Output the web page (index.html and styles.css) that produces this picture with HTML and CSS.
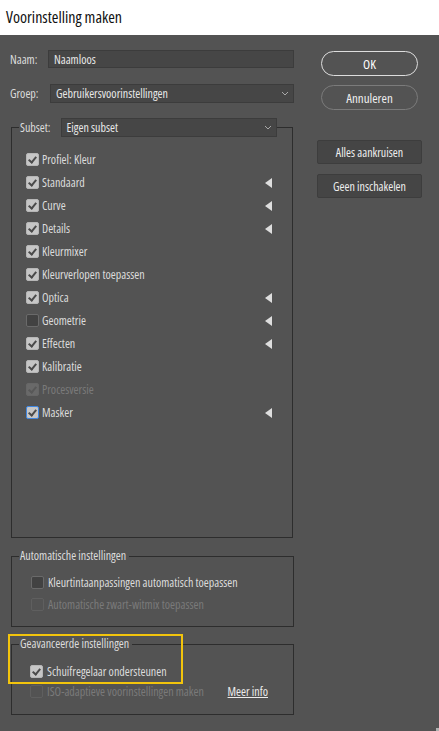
FILE: index.html
```html
<!DOCTYPE html>
<html lang="nl">
<head>
    <meta charset="UTF-8">
    <meta name="viewport" content="width=device-width, initial-scale=1.0">
    <title>Voorinstelling maken</title>
    <link rel="stylesheet" href="styles.css">
</head>
<body>
    <div class="titlebar">Voorinstelling maken</div>

    <div class="dialog">
        <div class="main">
            <div class="field">
                <label class="fieldLabel naamLabel">Naam:</label>
                <div class="textInput">Naamloos</div>
            </div>
            <div class="field groepField">
                <label class="fieldLabel groepLabel">Groep:</label>
                <div class="selectBox">
                    <span>Gebruikersvoorinstellingen</span>
                    <svg class="chevron" width="8" height="5" viewBox="0 0 8 5"><path d="M1 1 L4 4 L7 1" fill="none" stroke="#a8a8a8" stroke-width="1"/></svg>
                </div>
            </div>

            <fieldset class="group subset">
                <legend class="subsetLegend">
                    <span>Subset:</span>
                    <div class="selectBox subsetSelect">
                        <span>Eigen subset</span>
                        <svg class="chevron" width="8" height="5" viewBox="0 0 8 5"><path d="M1 1 L4 4 L7 1" fill="none" stroke="#a8a8a8" stroke-width="1"/></svg>
                    </div>
                </legend>
                <ul class="checkList">
                    <li class="checkRow"><span class="cb on"></span><span class="checkText">Profiel: Kleur</span></li>
                    <li class="checkRow"><span class="cb on"></span><span class="checkText">Standaard</span><span class="arrow"></span></li>
                    <li class="checkRow"><span class="cb on"></span><span class="checkText">Curve</span><span class="arrow"></span></li>
                    <li class="checkRow"><span class="cb on"></span><span class="checkText">Details</span><span class="arrow"></span></li>
                    <li class="checkRow"><span class="cb on"></span><span class="checkText">Kleurmixer</span></li>
                    <li class="checkRow"><span class="cb on"></span><span class="checkText">Kleurverlopen toepassen</span></li>
                    <li class="checkRow"><span class="cb on"></span><span class="checkText">Optica</span><span class="arrow"></span></li>
                    <li class="checkRow"><span class="cb"></span><span class="checkText">Geometrie</span><span class="arrow"></span></li>
                    <li class="checkRow"><span class="cb on"></span><span class="checkText">Effecten</span><span class="arrow"></span></li>
                    <li class="checkRow"><span class="cb on"></span><span class="checkText">Kalibratie</span></li>
                    <li class="checkRow disabled"><span class="cb on"></span><span class="checkText">Procesversie</span></li>
                    <li class="checkRow"><span class="cb on focus"></span><span class="checkText">Masker</span><span class="arrow"></span></li>
                </ul>
            </fieldset>

            <fieldset class="group auto">
                <legend class="textLegend">Automatische instellingen</legend>
                <ul class="checkList small">
                    <li class="checkRow"><span class="cb"></span><span class="checkText">Kleurtintaanpassingen automatisch toepassen</span></li>
                    <li class="checkRow disabled"><span class="cb"></span><span class="checkText">Automatische zwart-witmix toepassen</span></li>
                </ul>
            </fieldset>

            <fieldset class="group advanced">
                <legend class="textLegend">Geavanceerde instellingen</legend>
                <ul class="checkList small">
                    <li class="checkRow"><span class="cb on"></span><span class="checkText">Schuifregelaar ondersteunen</span></li>
                    <li class="checkRow disabled"><span class="cb"></span><span class="checkText">ISO-adaptieve voorinstellingen maken</span><a class="moreInfo" href="#">Meer info</a></li>
                </ul>
            </fieldset>

            <!-- gele markering rond de geavanceerde instellingen -->
            <div class="highlight"></div>
        </div>

        <div class="side">
            <button class="pill primary">OK</button>
            <button class="pill">Annuleren</button>
            <button class="flatBtn firstFlat">Alles aankruisen</button>
            <button class="flatBtn">Geen inschakelen</button>
        </div>

        <span class="grip"></span>
    </div>
</body>
</html>
```

FILE: styles.css
```css
body {
    margin: 0;
    width: 439px;
    height: 731px;
    overflow: hidden;
    background-color: #535353;
    font-family: "Liberation Sans Narrow", "Open Sans", sans-serif;
    font-stretch: 80%;
    font-size: 12px;
    color: #dcdcdc;
}

.titlebar {
    height: 35px;
    line-height: 34px;
    padding-left: 6px;
    background-color: #ffffff;
    color: #111111;
    font-size: 16px;
    font-stretch: 87.5%;
    box-sizing: border-box;
}

.dialog {
    position: relative;
    display: flex;
    height: 696px;
}

.main {
    width: 294px;
    padding-top: 15px;
}

.field {
    display: flex;
    align-items: center;
    height: 18px;
}

.groepField {
    height: 19px;
    margin-top: 16px;
}

.fieldLabel {
    padding-left: 10px;
    box-sizing: border-box;
}

.naamLabel {
    width: 48px;
}

.groepLabel {
    width: 50px;
}

.textInput,
.selectBox {
    flex: 1;
    height: 100%;
    box-sizing: border-box;
    background-color: #464646;
    border: 1px solid #3c3c3c;
    padding-left: 5px;
    display: flex;
    align-items: center;
    color: #e8e8e8;
}

.selectBox span {
    flex: 1;
}

.chevron {
    margin-right: 4px;
}

/* groepen met een titel in de rand */
.group {
    margin: 0;
    padding: 0;
    border: 1px solid #2d2d2d;
    min-width: 0;
}

.subset {
    margin: 15px 0 0 11px;
    width: 282px;
    box-sizing: border-box;
}

.subsetLegend {
    display: flex;
    align-items: center;
    width: 258px;
    height: 19px;
    margin-left: 7px;
    padding: 0 0 0 1px;
    box-sizing: border-box;
}

.subsetSelect {
    margin-left: 10px;
    height: 19px;
}

.textLegend {
    line-height: 16px;
    margin-left: 7px;
    padding: 0 3px 0 1px;
}

.auto {
    margin: 10px 0 0 11px;
    width: 283px;
    box-sizing: border-box;
}

.advanced {
    margin: 9px 0 0 11px;
    width: 283px;
    box-sizing: border-box;
}

.checkList {
    list-style: none;
    margin: 0;
    padding: 11px 19px 113px 14px;
}

.checkList.small {
    padding: 7px 10px 11px 19px;
}

.advanced .checkList.small {
    padding: 9px 10px 13px 18px;
}

.checkRow {
    display: flex;
    align-items: center;
    height: 23px;
}

.small .checkRow {
    height: 22px;
}

.advanced .checkRow {
    height: 20px;
}

.checkText {
    flex: 1;
    margin-left: 3px;
    white-space: nowrap;
}

.small .checkText {
    margin-left: 4px;
}

.disabled .checkText {
    color: #7a7a7a;
}

/* selectievakjes */
.cb {
    width: 13px;
    height: 13px;
    box-sizing: border-box;
    border-radius: 2px;
    border: 1px solid #6a6a6a;
    background-color: #424242;
    position: relative;
}

.cb.on {
    background-color: #c6c6c6;
    border-color: #b6b6b6;
}

.cb.on::after {
    content: "";
    position: absolute;
    left: 3px;
    top: 1px;
    width: 3px;
    height: 6px;
    border-right: 2px solid #4b4b4b;
    border-bottom: 2px solid #4b4b4b;
    transform: rotate(40deg);
}

.cb.focus {
    border: 1.5px solid #3f86e0;
}

.cb.focus::after {
    left: 2.5px;
    top: 0.5px;
}

.disabled .cb {
    background-color: transparent;
    border-color: #5f5f5f;
}

.disabled .cb.on {
    background-color: #696969;
    border-color: #666666;
}

.disabled .cb.on::after {
    border-color: #585858;
}

.arrow {
    width: 0;
    height: 0;
    margin-right: 1px;
    border-top: 5px solid transparent;
    border-bottom: 5px solid transparent;
    border-right: 7px solid #dedede;
}

.moreInfo {
    color: #ececec;
    margin-right: 15px;
}

.highlight {
    position: absolute;
    left: 8px;
    top: 599px;
    width: 175px;
    height: 50px;
    box-sizing: border-box;
    border: 2px solid #f2c40c;
    pointer-events: none;
}

/* knoppen rechts */
.side {
    margin-left: 23px;
    width: 105px;
    padding-top: 16px;
    display: flex;
    flex-direction: column;
    align-items: center;
}

.pill,
.flatBtn {
    font-family: "Liberation Sans Narrow", "Open Sans", sans-serif;
    font-stretch: 80%;
    padding: 0;
}

.pill {
    width: 97px;
    height: 25px;
    border-radius: 13px;
    border: 1px solid #7b7b7b;
    background: none;
    color: #eeeeee;
    font-size: 13px;
    margin-bottom: 9px;
}

.pill.primary {
    border: 1.5px solid #dddddd;
    color: #ffffff;
}

.flatBtn {
    width: 105px;
    height: 24px;
    border: 1px solid #3d3d3d;
    border-radius: 2px;
    background-color: #454545;
    color: #eeeeee;
    font-size: 12px;
    margin-bottom: 10px;
}

.firstFlat {
    margin-top: 21px;
}

.grip {
    position: absolute;
    right: 0;
    bottom: 0;
    width: 3px;
    height: 3px;
    background-color: #b0b0b0;
}
```
